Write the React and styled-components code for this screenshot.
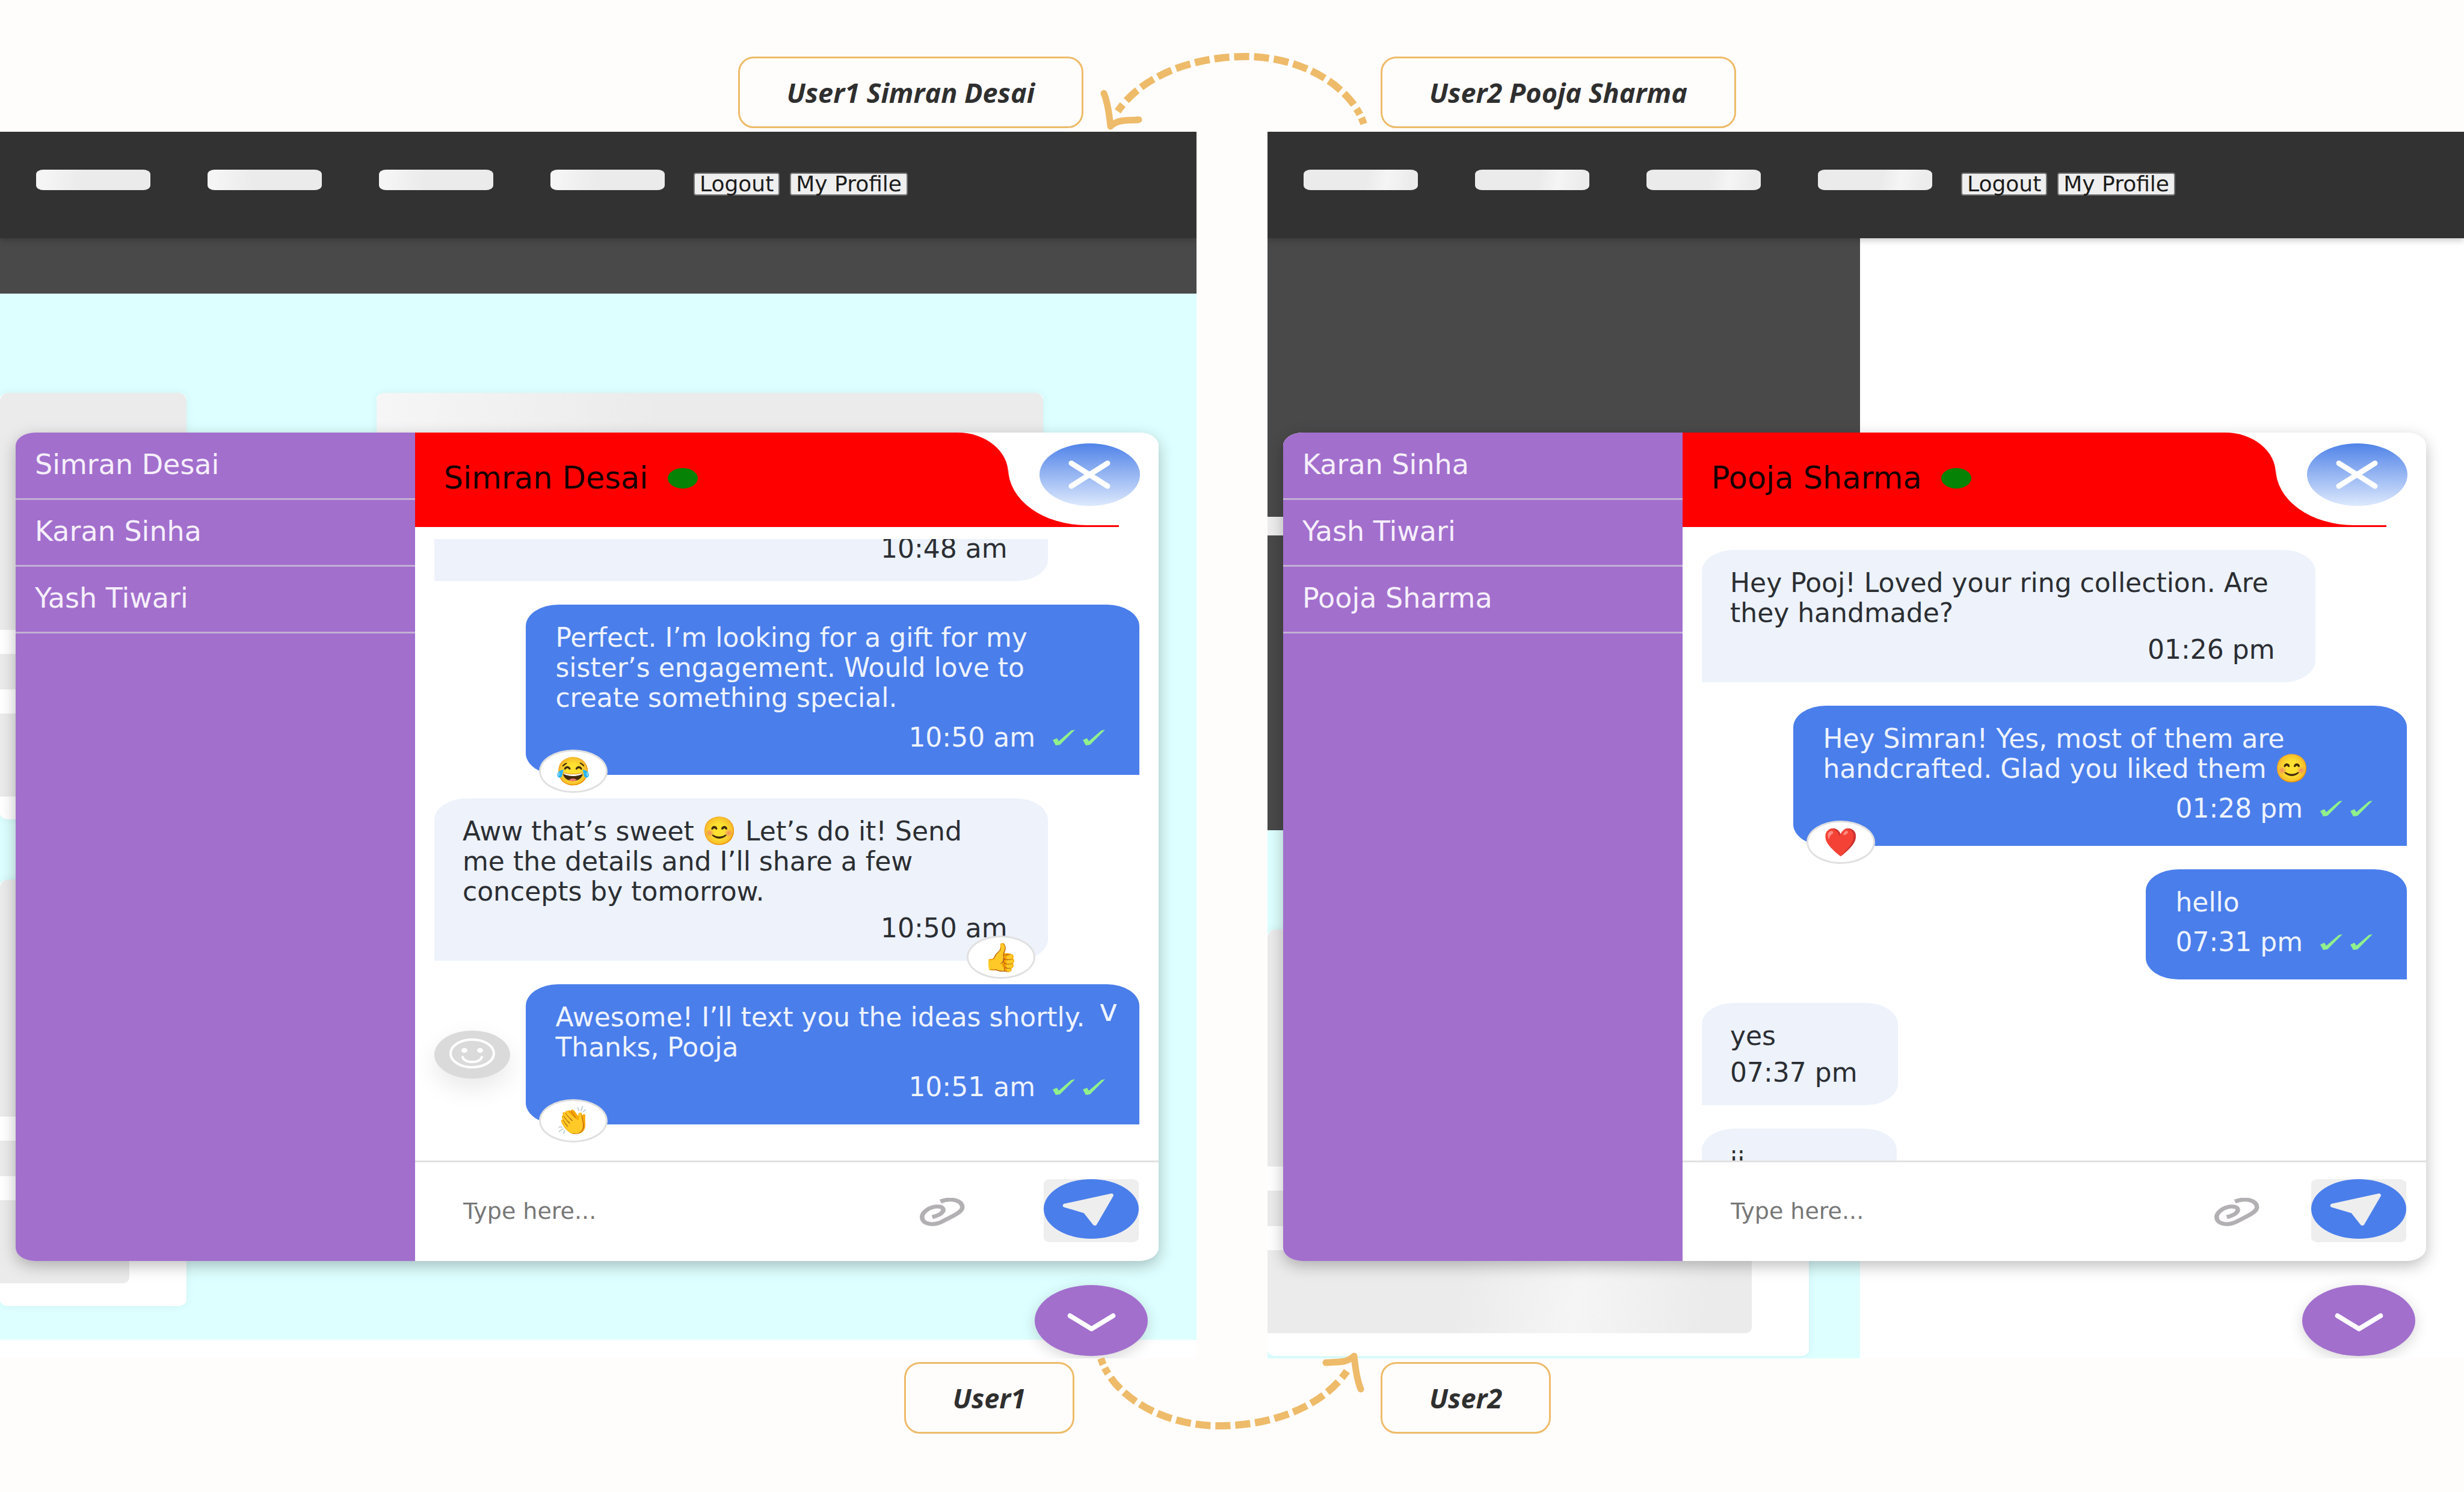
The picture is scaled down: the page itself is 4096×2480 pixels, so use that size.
import React from "react";
import styled, { createGlobalStyle, css } from "styled-components";

const color = {
  page: "#fffdfc",
  amber: "#eebb6a",
  nav: "#323232",
  slate: "#494949",
  cyan: "#deffff",
  purple: "#a26fcd",
  blue: "#4a7eeb",
  mist: "#edf2fb",
  tick: "#90f08c",
};

const GlobalStyle = createGlobalStyle`
  * { box-sizing: border-box; }
  body {
    margin: 0;
    background: ${color.page};
    font-family: "DejaVu Sans", "Noto Color Emoji", sans-serif;
  }
  button, input { font: inherit; margin: 0; }
`;

/* ---------- page ---------- */

const Page = styled.main`
  position: relative;
  min-height: 100vh;
  padding: 94px 0 97px;
  display: flex;
  flex-direction: column;
  gap: 6px;
  background: ${color.page};
`;

const Columns = styled.div`
  display: grid;
  grid-template-columns: minmax(0, 1fr) minmax(0, 1fr);
  column-gap: 118px;
`;

const LabelCell = styled.div`
  display: flex;
  justify-content: ${(p) => (p.$end ? "flex-end" : "flex-start")};
  padding: 0 ${(p) => (p.$wideInset ? "203px" : "188px")};
`;

const Label = styled.div`
  height: 119px;
  padding: 0 78px;
  display: flex;
  align-items: center;
  border: 3px solid ${color.amber};
  border-radius: 26px;
  color: #2f2f2f;
  font: italic 700 45px/60px "Open Sans", sans-serif;
  white-space: nowrap;
`;

const ArrowSvg = styled.svg`
  position: absolute;
  width: 451px;
  height: 134px;
  fill: none;
  stroke: ${color.amber};
  z-index: 3;
  ${(p) =>
    p.$flip
      ? css`
          left: calc(50% - 227px);
          bottom: 100px;
        `
      : css`
          left: calc(50% - 223px);
          top: 84px;
        `}
`;

function Arrow({ flip }) {
  return (
    <ArrowSvg $flip={flip} viewBox="0 0 451 134" aria-hidden="true">
      <g transform={flip ? "rotate(180 225.5 67)" : undefined}>
        <path
          d="M442 122C422 60 340 10 246 10C160 10 75 40 33 101"
          strokeWidth="12"
          strokeDasharray="11 6 11 8 25 8 25 8 25 8 25 8 25 8 25 8 25 8 25 8 25 8 25 8 25 8 25 8 25 9 15 8 15 8 15 100"
        />
        <path
          d="M10 71C16 86 19 105 21 126C34 114 46 117 68 115"
          strokeWidth="11"
          strokeLinecap="round"
          strokeLinejoin="round"
        />
      </g>
    </ArrowSvg>
  );
}

/* ---------- site screen ---------- */

const Screen = styled.section`
  display: flex;
  flex-direction: column;
  min-width: 0;
  overflow: hidden;
  background: #fff;
`;

const NavBar = styled.nav`
  position: relative;
  z-index: 1;
  display: flex;
  align-items: flex-start;
  gap: 95px;
  height: 177px;
  padding: 63px 60px 0;
  background: ${color.nav};
  box-shadow: 0 4px 10px rgba(0, 0, 0, 0.2);
`;

const NavPill = styled.span`
  width: 190px;
  height: 34px;
  border-radius: 12px / 8px;
  background: ${(p) =>
    p.$sheenRight
      ? "linear-gradient(100deg, #ebebeb 55%, #f5f5f5 72%, #ececec 92%)"
      : "linear-gradient(100deg, #f5f5f5 8%, #ebebeb 40%)"};
`;

const NavActions = styled.div`
  display: flex;
  gap: 17px;
  margin: 5px 0 0 -47px;
`;

const NavButton = styled.button`
  height: 38px;
  padding: 0 8px;
  border: 2px solid #767676;
  border-radius: 4px;
  background: #efefef;
  color: #1c1c1c;
  font-size: 36px;
  line-height: 32px;
  white-space: nowrap;
`;

const Body = styled.div`
  position: relative;
  display: flex;
  flex-direction: column;
  gap: 40px;
  padding: 323px 63px 4px 26px;
`;

const Backdrop = styled.div`
  position: absolute;
  inset: 0;
  display: flex;
  flex-direction: column;
  width: ${(p) => p.$width || "100%"};
  background: ${color.cyan};
  overflow: hidden;
`;

const Band = styled.div`
  flex: none;
  height: ${(p) => p.$height}px;
  background: ${(p) => p.$tone};
`;

const Shelf = styled.div`
  flex: 1;
  display: flex;
  gap: 316px;
  padding-top: 165px;
`;

const CardStack = styled.div`
  display: flex;
  flex-direction: column;
  gap: 100px;
  width: ${(p) => p.$width}px;
`;

const CardBox = styled.div`
  display: flex;
  flex-direction: column;
  padding-bottom: 38px;
  border-radius: 14px / 10px;
  background: #fff;
  box-shadow: 0 0 14px rgba(0, 60, 60, 0.07);
`;

const Bone = styled.div`
  height: ${(p) => p.$height}px;
  margin: ${(p) => (p.$inset ? "40px 95px 0 0" : "0")};
  border-radius: ${(p) => (p.$inset ? "0 10px 10px 0" : "14px 14px 0 0")};
  background: ${(p) =>
    p.$sheen === "mid"
      ? "linear-gradient(100deg, #ebebeb 40%, #f5f5f5 64%, #ebebeb 90%)"
      : p.$sheen === "start"
      ? "linear-gradient(100deg, #f6f6f6 0%, #ebebeb 40%)"
      : "#ebebeb"};
`;

function Card({ sheen }) {
  return (
    <CardBox>
      <Bone $height={394} $sheen={sheen} />
      <Bone $height={59} $inset />
      <Bone $height={138} $inset $sheen={sheen} />
    </CardBox>
  );
}

/* ---------- chat window ---------- */

const Window = styled.div`
  position: relative;
  display: grid;
  grid-template-columns: 664px minmax(0, 1fr);
  border-radius: 32px / 22px;
  overflow: hidden;
  background: #fff;
  box-shadow: 0 8px 26px rgba(0, 0, 0, 0.26);
`;

const Contacts = styled.ul`
  margin: 0;
  padding: 0;
  list-style: none;
  background: ${color.purple};
`;

const Contact = styled.li`
  height: ${(p) => (p.$first ? 112 : 111)}px;
  padding: 0 32px 4px;
  display: flex;
  align-items: center;
  border-bottom: 3px solid #c3b0d3;
  color: #f6effb;
  font-size: 46px;
  line-height: 50px;
`;

const Chat = styled.div`
  display: flex;
  flex-direction: column;
  height: 1377px;
`;

const Header = styled.header`
  flex: none;
  display: flex;
  height: 157px;
`;

const HeaderTitle = styled.div`
  flex: 1;
  display: flex;
  align-items: center;
  gap: 32px;
  padding: 0 0 6px 48px;
  border-top-right-radius: 84px 68px;
  background: #ff0000;
`;

const Name = styled.h2`
  margin: 0;
  color: #180000;
  font-size: 51px;
  font-weight: 400;
  line-height: 60px;
`;

const Online = styled.span`
  width: 50px;
  height: 34px;
  border-radius: 50%;
  background: #068306;
`;

const HeaderTail = styled.div`
  width: 250px;
  background: linear-gradient(#ff0000, #ff0000) left bottom / 184px 60% no-repeat;
`;

const CloseNotch = styled.div`
  height: 154px;
  padding: 18px 31px 0 52px;
  border-bottom-left-radius: 130px 94px;
  background: #fff;
`;

const CloseButton = styled.button`
  display: block;
  width: 167px;
  height: 104px;
  padding: 0;
  border: 0;
  border-radius: 50%;
  background: linear-gradient(#5083e8, #dde9fd);
`;

const Messages = styled.div`
  flex: 1;
  min-height: 0;
  margin-top: 20px;
  padding: ${(p) => (p.$fromEnd ? "0 32px 60px" : "18px 32px 0")};
  display: flex;
  flex-direction: column;
  justify-content: ${(p) => (p.$fromEnd ? "flex-end" : "flex-start")};
  gap: 39px;
  overflow: hidden;
`;

const Row = styled.div`
  flex: none;
  display: flex;
  align-items: center;
  justify-content: ${(p) => (p.$sent ? "flex-end" : "flex-start")};
  gap: 26px;
`;

const Bubble = styled.div`
  position: relative;
  flex: none;
  width: ${(p) => (p.$wide ? "87%" : "auto")};
  min-width: 324px;
  min-height: ${(p) => (p.$sent ? 183 : 170)}px;
  display: flex;
  flex-direction: column;
  font-size: 44px;
  line-height: 50px;
  ${(p) =>
    p.$sent
      ? css`
          gap: 16px;
          padding: 30px 56px 37px 49px;
          border-radius: 54px 54px 0 54px / 36px 36px 0 36px;
          background: ${color.blue};
          color: #eef3fe;
        `
      : css`
          gap: 11px;
          padding: 30px 67px 29px 47px;
          border-radius: 54px 54px 54px 0 / 36px 36px 36px 0;
          background: ${color.mist};
          color: #2b2e33;
        `}
`;

const MessageText = styled.p`
  margin: 0;
  white-space: pre;
`;

const Emoji = styled.span`
  font-family: "Noto Color Emoji", sans-serif;
  font-size: 46px;
  line-height: 0;
`;

const Meta = styled.div`
  display: flex;
  justify-content: flex-end;
  align-items: center;
  gap: 27px;
  margin-top: auto;
  white-space: nowrap;
`;

const TickSvg = styled.svg`
  width: 90px;
  height: 28px;
  fill: ${color.tick};
`;

const Reaction = styled.span`
  position: absolute;
  bottom: -30px;
  ${(p) => (p.$right ? "right: 21px;" : "left: 22px;")}
  width: 114px;
  height: 72px;
  display: flex;
  align-items: center;
  justify-content: center;
  border: 3px solid #e0e0e0;
  border-radius: 50%;
  background: #fff;
`;

const MenuButton = styled.button`
  position: absolute;
  top: 18px;
  right: 36px;
  padding: 0;
  border: 0;
  background: none;
  color: #eef3fe;
  font-size: 52px;
  line-height: 50px;
`;

const ReactButton = styled.button`
  width: 126px;
  height: 80px;
  padding: 0;
  border: 0;
  border-radius: 50%;
  background: #dadada;
  box-shadow: 0 16px 40px rgba(0, 0, 0, 0.09);
`;

const Footer = styled.form`
  flex: none;
  display: flex;
  align-items: flex-start;
  height: 167px;
  padding: 28px 33px 0 80px;
  border-top: 3px solid #e1e1e1;
`;

const MessageInput = styled.input`
  flex: 1;
  min-width: 0;
  height: 105px;
  padding: 0;
  border: 0;
  outline: 0;
  background: none;
  font-size: 38px;
  &::placeholder {
    color: #777;
    opacity: 1;
  }
`;

const AttachButton = styled.button`
  width: 76px;
  height: 110px;
  margin-right: ${(p) => p.$gap}px;
  padding: 0;
  border: 0;
  background: none;
`;

const SendButton = styled.button`
  width: 158px;
  height: 105px;
  padding: 0 0 6px;
  border: 0;
  border-radius: 12px / 8px;
  background: #eeeeee;
`;

const FloatButton = styled.button`
  position: relative;
  align-self: flex-end;
  width: 188px;
  height: 118px;
  margin-right: 18px;
  padding: 0;
  border: 0;
  border-radius: 50%;
  background: ${color.purple};
  box-shadow: 0 6px 24px rgba(0, 0, 0, 0.16);
`;

const Glyph = styled.svg`
  display: block;
  width: 100%;
  height: ${(p) => p.$height || "100%"};
  margin: auto;
`;

const Ticks = () => (
  <TickSvg viewBox="0 0 90 28" aria-label="Read">
    <path d="M2 18L9 15L12 20L33 2L39 1L14 26L7 27Z" />
    <path d="M52 18L59 15L62 20L83 2L89 1L64 26L57 27Z" />
  </TickSvg>
);

const withEmoji = (text) =>
  text
    .split(/(\p{Emoji_Presentation})/u)
    .map((part, i) => (i % 2 ? <Emoji key={i}>{part}</Emoji> : part));

function Message({ text, time, sent, wide, reaction, menu }) {
  return (
    <Row $sent={sent}>
      {menu && (
        <ReactButton type="button" aria-label="React">
          <Glyph viewBox="0 0 126 80" fill="none" stroke="#fff">
            <ellipse cx="63" cy="38" rx="36" ry="23" strokeWidth="4" />
            <path d="M47 44C50 55 76 55 79 44" strokeWidth="4" strokeLinecap="round" />
            <ellipse cx="50" cy="33" rx="5" ry="4" fill="#fff" stroke="none" />
            <ellipse cx="76" cy="33" rx="5" ry="4" fill="#fff" stroke="none" />
          </Glyph>
        </ReactButton>
      )}
      <Bubble $sent={sent} $wide={wide}>
        {text && <MessageText>{withEmoji(text)}</MessageText>}
        {time && (
          <Meta>
            <time>{time}</time>
            {sent && <Ticks />}
          </Meta>
        )}
        {menu && (
          <MenuButton type="button" aria-label="Message menu">
            v
          </MenuButton>
        )}
        {reaction && (
          <Reaction $right={!sent}>
            <Emoji>{reaction}</Emoji>
          </Reaction>
        )}
      </Bubble>
    </Row>
  );
}

function ChatWindow({ id, contacts, title, messages, fromEnd, attachGap }) {
  return (
    <Window>
      <Contacts>
        {contacts.map((name, i) => (
          <Contact key={name} $first={i === 0}>
            {name}
          </Contact>
        ))}
      </Contacts>
      <Chat>
        <Header>
          <HeaderTitle>
            <Name>{title}</Name>
            <Online />
          </HeaderTitle>
          <HeaderTail>
            <CloseNotch>
              <CloseButton type="button" aria-label="Close">
                <Glyph viewBox="0 0 167 104" stroke="#fff" strokeWidth="9" strokeLinecap="round">
                  <path d="M53 33L113 71M113 33L53 71" />
                </Glyph>
              </CloseButton>
            </CloseNotch>
          </HeaderTail>
        </Header>
        <Messages $fromEnd={fromEnd}>
          {messages.map((m, i) => (
            <Message key={i} {...m} />
          ))}
        </Messages>
        <Footer onSubmit={(e) => e.preventDefault()}>
          <MessageInput id={id} aria-label="Message" placeholder="Type here..." />
          <AttachButton type="button" aria-label="Attach file" $gap={attachGap}>
            <Glyph
              $height="48px"
              viewBox="130 238 280 204"
              preserveAspectRatio="none"
              fill="none"
              stroke="#b2b0b3"
              strokeWidth="28"
            >
              <path d="M260 264C325 235 397 255 394 308C390 340 335 368 275 403C215 440 145 425 148 370C150 340 185 308 232 300C280 295 288 325 264 348C250 360 235 366 210 374" />
            </Glyph>
          </AttachButton>
          <SendButton type="submit" aria-label="Send">
            <Glyph viewBox="0 0 582 420" preserveAspectRatio="none">
              <ellipse cx="291" cy="210" rx="291" ry="210" fill={color.blue} />
              <path
                d="M130 186L414 114L313 314L254 228Z"
                fill="#eeeeee"
                stroke="#eeeeee"
                strokeWidth="26"
                strokeLinejoin="round"
              />
            </Glyph>
          </SendButton>
        </Footer>
      </Chat>
    </Window>
  );
}

function ChatToggle() {
  return (
    <FloatButton type="button" aria-label="Hide chat">
      <Glyph
        viewBox="0 0 189 118"
        fill="none"
        stroke="#fff"
        strokeWidth="8"
        strokeLinecap="round"
        strokeLinejoin="round"
      >
        <path d="M59 51L95 73L131 51" />
      </Glyph>
    </FloatButton>
  );
}

function Nav({ sheenRight }) {
  return (
    <NavBar>
      {[0, 1, 2, 3].map((i) => (
        <NavPill key={i} $sheenRight={sheenRight} />
      ))}
      <NavActions>
        <NavButton type="button">Logout</NavButton>
        <NavButton type="button">My Profile</NavButton>
      </NavActions>
    </NavBar>
  );
}

const simranMessages = [
  { time: "10:48 am", wide: true },
  {
    sent: true,
    wide: true,
    text: "Perfect. I’m looking for a gift for my\nsister’s engagement. Would love to\ncreate something special.",
    time: "10:50 am",
    reaction: "😂",
  },
  {
    wide: true,
    text: "Aww that’s sweet 😊 Let’s do it! Send\nme the details and I’ll share a few\nconcepts by tomorrow.",
    time: "10:50 am",
    reaction: "👍",
  },
  {
    sent: true,
    wide: true,
    menu: true,
    text: "Awesome! I’ll text you the ideas shortly.\nThanks, Pooja",
    time: "10:51 am",
    reaction: "👏",
  },
];

const poojaMessages = [
  { wide: true, text: "Hey Pooj! Loved your ring collection. Are\nthey handmade?", time: "01:26 pm" },
  {
    sent: true,
    wide: true,
    text: "Hey Simran! Yes, most of them are\nhandcrafted. Glad you liked them 😊",
    time: "01:28 pm",
    reaction: "❤️",
  },
  { sent: true, text: "hello", time: "07:31 pm" },
  { text: "yes", time: "07:37 pm" },
  { text: "ii" },
];

export default function App() {
  return (
    <Page>
      <GlobalStyle />
      <Columns>
        <LabelCell $end>
          <Label>User1 Simran Desai</Label>
        </LabelCell>
        <LabelCell>
          <Label>User2 Pooja Sharma</Label>
        </LabelCell>
      </Columns>
      <Arrow />
      <Columns>
        <Screen>
          <Nav />
          <Body>
            <Backdrop>
              <Band $height={92} $tone={color.slate} />
              <Shelf>
                <CardStack $width={310}>
                  <Card />
                  <Card />
                </CardStack>
                <CardStack $width={1108}>
                  <Card sheen="start" />
                </CardStack>
              </Shelf>
              <Band $height={31} $tone="#fff" />
            </Backdrop>
            <ChatWindow
              id="message-simran"
              contacts={["Simran Desai", "Karan Sinha", "Yash Tiwari"]}
              title="Simran Desai"
              messages={simranMessages}
              fromEnd
              attachGap={131}
            />
            <ChatToggle />
          </Body>
        </Screen>
        <Screen>
          <Nav sheenRight />
          <Body>
            <Backdrop $width="985px">
              <Band $height={463} $tone={color.slate} />
              <Band $height={31} $tone="#ededed" />
              <Band $height={490} $tone={color.slate} />
              <Shelf>
                <CardStack $width={900}>
                  <Card sheen="mid" />
                </CardStack>
              </Shelf>
            </Backdrop>
            <ChatWindow
              id="message-pooja"
              contacts={["Karan Sinha", "Yash Tiwari", "Pooja Sharma"]}
              title="Pooja Sharma"
              messages={poojaMessages}
              attachGap={86}
            />
            <ChatToggle />
          </Body>
        </Screen>
      </Columns>
      <Arrow flip />
      <Columns>
        <LabelCell $end $wideInset>
          <Label>User1</Label>
        </LabelCell>
        <LabelCell>
          <Label>User2</Label>
        </LabelCell>
      </Columns>
    </Page>
  );
}
